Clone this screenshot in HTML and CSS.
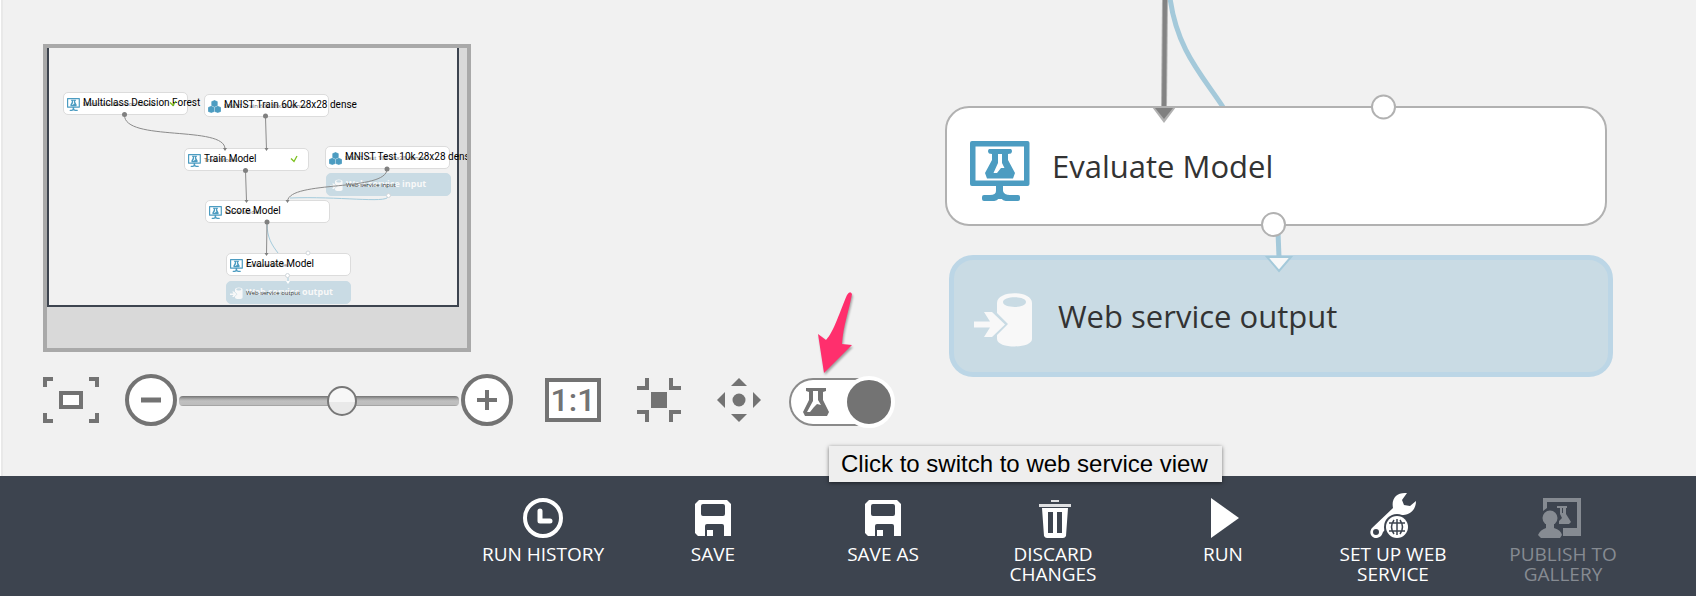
FILE: index.html
```
<!DOCTYPE html>
<html lang="en">
<head>
<meta charset="utf-8">
<title>Experiment canvas</title>
<link rel="stylesheet" href="styles.css">
</head>
<body>
<svg class="defs" aria-hidden="true">
  <symbol id="module" viewBox="0 0 60 60">
    <path fill="#4c9cc1" fill-rule="evenodd" d="M2 0H57.500Q59.500 0 59.500 2V43Q59.500 45 57.500 45H33V50Q34 54 40 54H48Q50 54 50 56V58Q50 60 48 60H38Q33 60 32 58H28Q27 60 22 60H14Q12 60 12 58V56Q12 54 14 54H20Q26 54 26 50V45H2Q0 45 0 43V2Q0 0 2 0ZM5.500 5.500V39.500H54V5.500Z"/>
    <path fill="#4c9cc1" d="M19 8H41Q43 10 41 12.500L38 13V19L45 32L43 37.500H17L15 32L22 19V13L19 12.500Q17 10 19 8Z"/>
    <path fill="#fff" d="M28 13H32V22L34.500 27H31L27 32H23.500L28 22Z"/>
  </symbol>
  <symbol id="dataset" viewBox="0 0 60 60">
    <g fill="#4c9cc1" stroke="#fff" stroke-width="1"><path d="M15 7L30 0L45 7V27L30 33L15 27Z"/><path d="M0 34L15 27L30 34V54L15 60L0 54Z"/><path d="M30 34L45 27L60 34V54L45 60L30 54Z"/></g>
  </symbol>
  <symbol id="service" viewBox="0 0 60 60">
    <path fill="#f8f8f8" fill-rule="evenodd" d="M23 12C23 -1 58 -1 58 12V48C58 58 23 58 23 48V44L34 33L23 22ZM29 11C29 17.500 52 17.500 52 11C52 4.500 29 4.500 29 11Z"/>
    <path fill="#f8f8f8" d="M0 30.500H16L10 21H18L31 33.500L18 46H10L16 36.500H0Z"/>
  </symbol>
</svg>

<main class="canvas">
  <svg class="wires" width="1696" height="476" aria-hidden="true">
    <path d="M1170 -2C1177 50 1202 75 1223 107" fill="none" stroke="#a4c9da" stroke-width="5"/>
    <path d="M1165 0L1164 107" stroke="#b1b1b1" stroke-width="6"/>
    <path d="M1165 0L1164 107" stroke="#838383" stroke-width="4"/>
  </svg>

  <section class="node node-model"><svg class="node-icon"><use href="#module"/></svg><span>Evaluate Model</span></section>
  <section class="node node-service"><svg class="node-icon"><use href="#service"/></svg><span>Web service output</span></section>

  <svg class="wires" width="1696" height="476" aria-hidden="true">
    <path d="M1152 107H1176L1164 123Z" fill="#b1b1b1"/><path d="M1155 108H1173L1164 119Z" fill="#808080"/>
    <path d="M1278 232L1279 257" stroke="#a4c9da" stroke-width="5"/>
    <path d="M1267 257H1291L1279 271Z" fill="#f8f8f8" stroke="#a4c9da" stroke-width="2"/>
    <g fill="#fff" stroke="#b1b1b1" stroke-width="2"><circle cx="1383.500" cy="107" r="11.500"/><circle cx="1273.500" cy="224.500" r="11.500"/></g>
  </svg>

  <div class="panel">
    <section class="minimap" aria-label="Overview">
      <div class="viewport"></div>
      <div class="mini mini-forest"><svg><use href="#module"/></svg><small>Multiclass Decision Forest</small><span>Multiclass Decision Forest</span></div>
      <div class="mini mini-train-data"><svg><use href="#dataset"/></svg><small>MNIST Train 60k 28x28 dense</small><span>MNIST Train 60k 28x28 dense</span></div>
      <div class="mini mini-train"><svg><use href="#module"/></svg><small>Train Model</small><span>Train Model</span></div>
      <div class="mini mini-test-data"><svg><use href="#dataset"/></svg><small>MNIST Test 10k 28x28 dense</small><span>MNIST Test 10k 28x28 dense</span></div>
      <div class="mini mini-service mini-input"><svg><use href="#service"/></svg><span>Web service input</span><small>Web service input</small></div>
      <div class="mini mini-score"><svg><use href="#module"/></svg><small>Score Model</small><span>Score Model</span></div>
      <div class="mini mini-evaluate"><svg><use href="#module"/></svg><small>Evaluate Model</small><span>Evaluate Model</span></div>
      <div class="mini mini-service mini-output"><svg><use href="#service"/></svg><span>Web service output</span><small>Web service output</small></div>
      <svg class="mini-wires" viewBox="47 48 420 300" width="420" height="300" aria-hidden="true">
        <g fill="none" stroke="#a4cbdc"><path d="M388 196C390 204 340 196 290 198"/><path d="M267 223C267 238 272 245 278 253"/><path d="M288 277V282"/></g>
        <g fill="none" stroke="#8b8b8b"><path d="M124.500 115C124 142 225 125 225 149"/><path d="M265.500 117L266.500 150"/><path d="M245.500 171L246.500 201"/><path d="M387 169C387 192 290 180 287.500 201"/><path d="M267 223L266.500 254"/></g>
        <g fill="#808080"><circle cx="124.500" cy="114.500" r="2.500"/><circle cx="265.500" cy="116" r="2.500"/><circle cx="245.500" cy="170.500" r="2.500"/><circle cx="387" cy="169" r="2.500"/><circle cx="267" cy="222" r="2.500"/>
        <path d="M223 148h4l-2 3zM264.500 148h4l-2 3zM244.500 200h4l-2 3zM285.500 200h4l-2 3zM264.500 253h4l-2 3z"/></g>
        <g fill="#fff" stroke="#d0d6da"><circle cx="388.500" cy="195.500" r="2"/><circle cx="308" cy="253" r="2"/><circle cx="287.500" cy="275.500" r="2"/></g>
        <path d="M286 281h4l-2 3z" fill="#fff"/>
        <path d="M291 158.500L294 161.500L297 156" fill="none" stroke="#7cc11f" stroke-width="1.300"/>
        <path d="M170 102.500L173 105.500L176 101" fill="none" stroke="#7cc11f" stroke-width="1.300"/>
      </svg>
    </section>

    <div class="tools">
      <button class="tool fit" aria-label="Zoom to fit"><svg width="56" height="46"><path d="M2 10V2H10M46 2H54V10M2 36V44H10M46 44H54V36" fill="none" stroke="#737373" stroke-width="4"/><path d="M18 16H38V30H18Z" fill="#fff" stroke="#737373" stroke-width="4"/></svg></button>
      <button class="tool" aria-label="Zoom out"><svg width="52" height="52"><circle cx="26" cy="26" r="24" fill="#fff" stroke="#737373" stroke-width="4"/><path d="M16 26H36" stroke="#737373" stroke-width="5"/></svg></button>
      <input class="slider" type="range" min="0" max="100" value="59" aria-label="Zoom level">
      <button class="tool zoom-in" aria-label="Zoom in"><svg width="52" height="52"><circle cx="26" cy="26" r="24" fill="#fff" stroke="#737373" stroke-width="4"/><path d="M16 26H36M26 16V36" stroke="#737373" stroke-width="4"/></svg></button>
      <button class="tool actual">1:1</button>
      <button class="tool collapse" aria-label="Collapse"><svg width="44" height="44"><path d="M0 10H10V0M34 0V10H44M0 34H10V44M34 44V34H44" fill="none" stroke="#737373" stroke-width="4"/><path d="M14 14H30V30H14Z" fill="#737373"/></svg></button>
      <button class="tool pan" aria-label="Pan"><svg width="44" height="44"><path d="M22 0L30 8H14ZM22 44L30 36H14ZM0 22L8 14V30ZM44 22L36 14V30Z" fill="#737373"/><circle cx="22" cy="22" r="6.500" fill="#737373"/></svg></button>
      <label class="switch"><input type="checkbox" role="switch" checked aria-label="Web service view"><svg width="28" height="30"><path fill="#737373" d="M4 1H24V4L21 5V13L27 25L25 29H3L1 25L7 13V5L4 4Z"/><path fill="#fff" d="M11 4H16V13L19 18L15 17L12 20L8 25H5L11 14Z"/></svg></label>
    </div>
  </div>

  <svg class="pointer" width="40" height="88" aria-hidden="true"><path d="M10 82L4 43L12 49C20 41 26 20 33 4Q36 -1 38 3C35 20 29 35 28 53L38 54Z" fill="#ff2f6d"/></svg>
  <div class="tooltip" role="tooltip">Click to switch to web service view</div>
</main>

<footer class="commands">
  <button class="command"><svg><circle cx="24" cy="25" r="18" fill="none" stroke="#fff" stroke-width="4"/><path d="M21 18V28H31" fill="none" stroke="#fff" stroke-width="5" stroke-linecap="round" stroke-linejoin="round"/></svg>RUN HISTORY</button>
  <button class="command"><svg><path fill="#fff" fill-rule="evenodd" d="M10 7H38L42 11V43H35V33Q35 31 33 31H18Q16 31 16 33V43H9L6 40V11ZM14 11Q12 11 12 13V21Q12 23 14 23H34Q36 23 36 21V13Q36 11 34 11ZM18 37H24V43H18Z"/></svg>SAVE</button>
  <button class="command"><svg><path fill="#fff" fill-rule="evenodd" d="M10 7H38L42 11V43H35V33Q35 31 33 31H18Q16 31 16 33V43H9L6 40V11ZM14 11Q12 11 12 13V21Q12 23 14 23H34Q36 23 36 21V13Q36 11 34 11ZM18 37H24V43H18Z"/></svg>SAVE AS</button>
  <button class="command"><svg><path fill="#dfe0e2" d="M22 7H30V9H22ZM10 11H42V14H10Z"/><path fill="#fff" fill-rule="evenodd" d="M13 15H39L37 43Q36 45 34 45H18Q16 45 15 43ZM19 19V40H24V19ZM28 19V40H33V19Z"/></svg>DISCARD CHANGES</button>
  <button class="command"><svg><path fill="#fff" d="M12 5L40 25L12 45Z"/></svg>RUN</button>
  <button class="command"><svg><path fill="#fff" fill-rule="evenodd" d="M38 0C28 -1 22 5 24 15L3 35C-1 40 3 46 8 45C12 44 13 42 14 39L30 22C38 23 47 19 47 8L41 13L35 12L33 7ZM7 36A3 3 0 1 1 7 42A3 3 0 1 1 7 36Z"/><circle cx="28" cy="34" r="13" fill="#3d444f"/><circle cx="28" cy="34" r="11" fill="#fff"/><path d="M28 26V42M20 30H36M20 38H36M25 27Q20 34 25 41M31 27Q36 34 31 41" fill="none" stroke="#3d444f" stroke-width="1.500"/></svg>SET UP WEB SERVICE</button>
  <button class="command" disabled><svg><path fill="#868b92" fill-rule="evenodd" d="M4 5H42V43H24V35H38V9H8V15L4 18Z"/><circle cx="11" cy="25" r="7.500" fill="#868b92"/><path fill="#868b92" d="M7 30H15V35Q22 37 23 42L21 45H2L-1 42Q1 37 7 35Z"/><path fill="#868b92" d="M18 13H28V15H27V21L32 29L30 31H20V28L23 25L21 21V15H18ZM23 15V20H24V15Z"/></svg>PUBLISH TO GALLERY</button>
</footer>
</body>
</html>
```

FILE: styles.css
```
*, *::after { box-sizing: border-box; }

body {
  margin: 0;
  min-height: 100vh;
  display: flex;
  flex-direction: column;
  background: #f1f1f1;
  font-family: "Open Sans", "Noto Sans", sans-serif;
  overflow-x: hidden;
}

button { border: 0; padding: 0; background: none; font: inherit; color: inherit; }
svg { display: block; flex: none; overflow: visible; }
.defs { position: absolute; width: 0; height: 0; }

.canvas {
  position: relative;
  flex: 1;
  border-left: 1px solid #fff;
  box-shadow: inset 2px 0 #e9e9e9;
}

.wires { position: absolute; top: 0; left: -1px; overflow: hidden; pointer-events: none; }

.node {
  position: absolute;
  display: flex;
  align-items: center;
  gap: 22px;
  padding: 0 23px;
  border-radius: 24px;
  font-size: 31px;
  color: #333;
  white-space: nowrap;
}
.node-model { left: 944px; top: 106px; width: 662px; height: 120px; background: #fff; border: 2px solid #b1b1b1; }
.node-service { left: 948px; top: 255px; width: 664px; height: 122px; padding: 0 20px; background: #c9dbe4; border: 5px solid #bcd6e6; gap: 24px; }
.node-icon { width: 60px; height: 60px; margin-top: 10px; }

/* Overview and zoom tools */
.panel { padding: 44px 42px 0; display: flex; flex-direction: column; align-items: flex-start; gap: 22px; }

.minimap {
  position: relative;
  width: 428px;
  height: 308px;
  overflow: hidden;
  background: #d9d9d9;
  border: 4px solid #a9a9a9;
}
.viewport { width: 412px; height: 259px; background: #f1f1f1; border: 2px solid #3d444f; border-top: 0; }
.mini-wires { position: absolute; top: 0; left: 0; }

.mini {
  position: absolute;
  width: 125px;
  height: 23px;
  background: #fff;
  border: 1px solid #dcdcdc;
  border-radius: 5px;
  white-space: nowrap;
}
.mini svg { position: absolute; left: 3px; top: 5px; width: 13px; height: 13px; }
.mini span, .mini small { position: absolute; left: 19px; top: 0; line-height: 20px; }
.mini span { font-family: Roboto, sans-serif; font-size: 10px; color: #000; }
.mini small { font-size: 6px; line-height: 22px; color: #777; }
.mini-service { background: #c9dbe4; border-color: #c9dbe4; }
.mini-service span { font-family: "Open Sans", sans-serif; font-size: 9px; color: #f8f8f8; font-weight: 700; }
.mini-service small { color: #333; }
.mini-forest { left: 16px; top: 44px; }
.mini-train-data { left: 157px; top: 46px; }
.mini-train { left: 137px; top: 100px; }
.mini-test-data { left: 278px; top: 98px; }
.mini-input { left: 279px; top: 125px; }
.mini-score { left: 158px; top: 152px; }
.mini-evaluate { left: 179px; top: 205px; }
.mini-output { left: 179px; top: 233px; }

.tools { display: flex; align-items: center; color: #737373; }
.fit { margin-right: 26px; }
.zoom-in { margin-right: 32px; }
.actual {
  width: 56px;
  height: 44px;
  margin-right: 36px;
  background: #fff;
  border: 4px solid #737373;
  font: 500 32px/36px Roboto, sans-serif;
  display: flex;
  justify-content: center;
  align-items: center;
}
.collapse { margin-right: 36px; }
.pan { margin-right: 28px; }

.slider { appearance: none; width: 280px; height: 30px; margin: 2px 2px 0; background: none; }
.slider::-webkit-slider-runnable-track {
  height: 10px;
  border-radius: 4px;
  background: linear-gradient(#737373, #aaa 30%, #c0c0c0 50%, #bdbdbd 85%, #999);
}
.slider::-webkit-slider-thumb {
  appearance: none;
  width: 30px;
  height: 30px;
  margin-top: -10px;
  border: 2px solid #777;
  border-radius: 50%;
  background: linear-gradient(#f7f7f7 52%, #e9e9e9 52%);
}

.switch { position: relative; display: block; height: 48px; margin-top: 4px; }
.switch input {
  appearance: none;
  display: flex;
  justify-content: flex-end;
  align-items: center;
  width: 104px;
  height: 48px;
  margin: 0;
  border: 2px solid #8a8a8a;
  border-right-color: #fff;
  border-radius: 24px;
  background: #fff;
}
.switch input::after {
  content: "";
  flex: none;
  width: 52px;
  height: 52px;
  margin-right: -4px;
  border: 4px solid #fff;
  border-radius: 50%;
  background: #737373;
}
.switch svg { position: absolute; left: 13px; top: 9px; }

.pointer { position: absolute; left: 813px; top: 291px; filter: drop-shadow(1px 2px 1px #0005); }
.tooltip {
  position: absolute;
  left: 828px;
  bottom: -6px;
  padding: 0 14px 0 12px;
  background: #eee;
  box-shadow: 0 1px 4px #0008;
  color: #000;
  font: 24px/36px "Liberation Sans", sans-serif;
  white-space: nowrap;
}

/* Command bar */
.commands {
  display: flex;
  justify-content: flex-end;
  min-height: 120px;
  padding: 17px 48px 0 0;
  background: #3d444f;
}
.command {
  width: 170px;
  padding: 0 16px;
  display: flex;
  flex-direction: column;
  align-items: center;
  gap: 3px;
  color: #fff;
  font-size: 19px;
  font-weight: 500;
  line-height: 20px;
}
.command svg { width: 48px; height: 48px; }
.command:disabled { color: #868b92; }
```
